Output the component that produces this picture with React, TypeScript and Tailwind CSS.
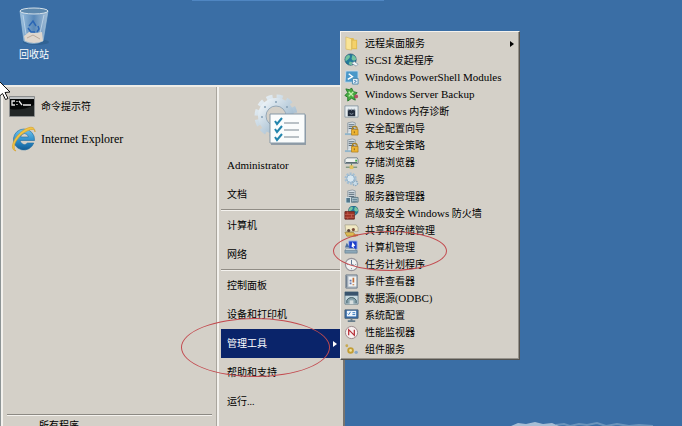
import type { ReactNode } from "react";

type IconName =
  | "folder" | "iscsi" | "powershell" | "backup" | "memory" | "lock" | "storage"
  | "gear" | "server" | "firewall" | "share" | "computer" | "clock" | "events"
  | "odbc" | "config" | "monitor" | "component";

const adminTools: { label: string; icon: IconName; more?: boolean }[] = [
  { label: "远程桌面服务", icon: "folder", more: true },
  { label: "iSCSI 发起程序", icon: "iscsi" },
  { label: "Windows PowerShell Modules", icon: "powershell" },
  { label: "Windows Server Backup", icon: "backup" },
  { label: "Windows 内存诊断", icon: "memory" },
  { label: "安全配置向导", icon: "lock" },
  { label: "本地安全策略", icon: "lock" },
  { label: "存储浏览器", icon: "storage" },
  { label: "服务", icon: "gear" },
  { label: "服务器管理器", icon: "server" },
  { label: "高级安全 Windows 防火墙", icon: "firewall" },
  { label: "共享和存储管理", icon: "share" },
  { label: "计算机管理", icon: "computer" },
  { label: "任务计划程序", icon: "clock" },
  { label: "事件查看器", icon: "events" },
  { label: "数据源(ODBC)", icon: "odbc" },
  { label: "系统配置", icon: "config" },
  { label: "性能监视器", icon: "monitor" },
  { label: "组件服务", icon: "component" },
];

const places = [
  ["Administrator", "文档"],
  ["计算机", "网络"],
  ["控制面板", "设备和打印机", "管理工具", "帮助和支持", "运行..."],
];

const serverTower = (
  <>
    <path d="M4 2 9 1l3 1v12H4z" fill="#d4dde3" stroke="#788894" strokeWidth=".7" />
    <path d="M5 4h6M5 6h6M5 8h6" stroke="#566874" />
    <path d="M4 13h8" stroke="#fff" />
  </>
);

const globe = (
  <>
    <circle cx="7" cy="7" r="6" fill="#257b9b" stroke="#164a69" strokeWidth=".7" />
    <path d="M3 3c3-2 4 0 3 2S3 7 2 9c-1-2-1-4 1-6m6-1c3 1 4 3 4 5-2 2-4 1-5-1zm-3 7 4 1-2 3-3-1z" fill="#74c4a0" />
  </>
);

const drawings: Record<IconName, ReactNode> = {
  folder: (
    <>
      <path d="M3 2h7l1 2h3v10H3z" fill="#e0bb52" />
      <path d="m2 1 6 2v12l-6-1z" fill="#f9e496" stroke="#d4b352" strokeWidth=".6" />
      <path d="M9 5h4v8H9" fill="#f4d169" />
    </>
  ),
  iscsi: (
    <>
      {globe}
      <path d="m8 11 5 3 2-2-4-3z" fill="#eef4f7" stroke="#708594" strokeWidth=".7" />
    </>
  ),
  powershell: (
    <>
      <path d="M2 1h13v12H1z" fill="#4a98c9" stroke="#c6dceb" />
      <path d="m5 4 4 3-5 3" fill="none" stroke="#fff" strokeWidth="1.5" />
      <path d="M9 9h6v6H9z" fill="#e2eef6" stroke="#4f89ad" />
      <path d="m11 11 2 1-2 2" fill="none" stroke="#256ba3" />
    </>
  ),
  backup: (
    <>
      <path d="m2 2 4 1 2-2 2 4 4 1-3 3 1 5-4-2-4 3V11L1 9l3-3z" fill="#48ac42" stroke="#24782b" />
      <path d="m5 5 5 5m0-5-5 5" stroke="#c3efae" strokeWidth="1.5" />
      <circle cx="13" cy="10" r="2" fill="#b24e68" />
    </>
  ),
  memory: (
    <>
      <path d="M1 2h14v12H1z" fill="#e7edf0" stroke="#8b9aa4" />
      <path d="M4 6h8v7H4z" fill="#222c3b" />
      <path d="M5 5v2m3-2v2m3-2v2M6 10l2 1 2-1" stroke="#8d9baa" fill="none" />
    </>
  ),
  lock: (
    <>
      {serverTower}
      <path d="M1 13h8v2H1z" fill="#91b5cb" />
      <path d="M9 10V8c0-3 5-3 5 0v2" fill="none" stroke="#a88024" strokeWidth="1.3" />
      <path d="M8 9h7v6H8z" fill="#edb432" stroke="#aa7718" strokeWidth=".7" />
      <path d="M11 11v2" stroke="#8b6316" />
    </>
  ),
  storage: (
    <>
      <path d="m1 5 2-2h11l1 2v4H1z" fill="#eef1ef" stroke="#718089" />
      <path d="M2 8h12" stroke="#51616a" />
      <path d="M12 6h2" stroke="#43ae48" strokeWidth="2" />
      <path d="M8 9v4m-6 0h12" stroke="#57815d" />
      <path d="M6 11h4v4H6z" fill="#e2c25d" />
    </>
  ),
  gear: (
    <>
      <circle cx="7" cy="7" r="5" fill="none" stroke="#a3bfd4" strokeWidth="3" strokeDasharray="2 1.140" />
      <circle cx="7" cy="7" r="4" fill="#d9e8f1" stroke="#8fb0cb" />
      <circle cx="12" cy="12" r="2.500" fill="#c9dce8" stroke="#8ba9c0" strokeWidth="1.5" strokeDasharray="1.500 .8" />
    </>
  ),
  server: (
    <>
      {serverTower}
      <path d="M2 9h5v6H2z" fill="#52788c" stroke="#d9e3e6" />
      <path d="M8 9h7v5H8z" fill="#b7cdd5" stroke="#617b87" />
      <path d="M9 11h5m-5 2h5" stroke="#547587" />
    </>
  ),
  firewall: (
    <>
      <g transform="translate(4 -1) scale(.85)">{globe}</g>
      <path d="M1 6h10v8H1z" fill="#9e3427" stroke="#692a24" />
      <path d="M1 9h10M1 12h10M4 6v3m4 0v3m-4 0v2" stroke="#c8695a" strokeWidth=".7" />
    </>
  ),
  share: (
    <>
      <path d="M1 2h12l2 3v4H2z" fill="#f0e8c2" stroke="#a09c82" strokeWidth=".7" />
      <path d="M1 10h9l3 4H3z" fill="#dcb953" stroke="#9a7b2e" strokeWidth=".7" />
      <circle cx="5" cy="8" r="1.700" fill="#5c463c" />
      <circle cx="10" cy="7" r="1.700" fill="#7b4b39" />
      <path d="M10 12h5v2h-5z" fill="#cb7d36" />
    </>
  ),
  computer: (
    <>
      <path d="M5 1h9v9H5z" fill="#1d3fcb" stroke="#a9bce4" />
      <path d="m9 2 3 4-2 1 1 2-3-2z" fill="#fff" />
      <path d="M3 3 1 8h5z" fill="#4c6f9d" />
      <path d="M2 9h9l3 3H1z" fill="#dce3e6" stroke="#8997a3" strokeWidth=".7" />
      <path d="M1 11h13v3H1z" fill="#8ba7b8" stroke="#66808f" strokeWidth=".7" />
    </>
  ),
  clock: (
    <>
      <circle cx="8" cy="8" r="6.500" fill="#f1f2f2" stroke="#96949a" strokeWidth="1.3" />
      <path d="M8 3v5l3 1" fill="none" stroke="#536e8c" />
      <path d="M8 12v1M3 8h1m8 0h1" stroke="#6d8597" />
    </>
  ),
  events: (
    <>
      <path d="M2 1h12v14H2z" fill="#c0c9d1" stroke="#697786" />
      <path d="M5 3h8v10H5z" fill="#f2f3f2" />
      <path d="M3 2v12" stroke="#57667b" />
      <path d="M10 4v5m0 2v1" stroke="#c0703a" strokeWidth="1.8" />
      <path d="M6 7h2m-2 3h2" stroke="#6478b0" strokeWidth="2" />
    </>
  ),
  odbc: (
    <>
      <path d="M1 1h14v13H1z" fill="#c5d8df" stroke="#6b818d" />
      <path d="M1 1h14v4H1z" fill="#39546e" />
      <path d="M3 13V10c2-4 8-4 10 0v3" fill="#8aa5ae" stroke="#3a5761" />
      <path d="M6 10h4v4H6z" fill="#d7dfdf" />
    </>
  ),
  config: (
    <>
      <path d="M1 2h14v9H1z" fill="#3268a7" stroke="#4d6479" />
      <path d="M3 3h10v6H3z" fill="#f2f7fd" />
      <path d="m4 6 1 1 2-3m2 1h3m-3 2h3" fill="none" stroke="#3177bf" />
      <path d="M8 11v2m-4 1h8" stroke="#687d8b" strokeWidth="2" />
    </>
  ),
  monitor: (
    <>
      <circle cx="8" cy="8" r="6.500" fill="#f7f0f0" stroke="#9b8587" />
      <path d="M5 11V5l6 6V5" fill="none" stroke="#b52c34" strokeWidth="1.300" />
    </>
  ),
  component: (
    <>
      <circle cx="7" cy="9" r="2.500" fill="#f0e2a0" stroke="#c39e35" strokeWidth="2" />
      <circle cx="3" cy="4" r="1.500" fill="#c6a953" />
      <circle cx="13" cy="11" r="1.800" fill="#88a8c6" />
    </>
  ),
};

function ToolIcon({ name }: { name: IconName }) {
  return (
    <svg viewBox="0 0 16 16" className="h-[15px] w-[15px] shrink-0" aria-hidden="true">
      {drawings[name]}
    </svg>
  );
}

// Latin runs are set one step larger than the Chinese around them
function Label({ text }: { text: string }) {
  return (
    <span className="whitespace-pre">
      {text.split(/([A-Za-z]+(?: [A-Za-z]+)*)/).map((part, i) =>
        i % 2 ? <span key={i} className="text-[11px]">{part}</span> : part
      )}
    </span>
  );
}

function RecycleBin() {
  return (
    <svg viewBox="0 0 36 42" className="h-[42px] w-9" aria-hidden="true">
      <defs>
        <linearGradient id="bin">
          <stop stopColor="#b5d5ee" stopOpacity=".8" />
          <stop offset=".5" stopColor="#608fbd" stopOpacity=".8" />
          <stop offset="1" stopColor="#d0e0eb" stopOpacity=".7" />
        </linearGradient>
      </defs>
      <ellipse cx="20" cy="37" rx="13" ry="3" fill="#25527b" opacity=".4" />
      <path d="m4 6 4 30q9 5 19 0l5-30z" fill="url(#bin)" stroke="#9fc0d9" strokeWidth=".7" />
      <path d="m8 31 5-4 7 1 6-1 1 9q-9 4-18 0z" fill="#ded6cd" />
      <path d="m11 33 6-3 7 4" fill="none" stroke="#b8a99c" />
      <path d="m13 21 4-5 3 5m-8 2 3 4h4m3-6 1 3-2 3" fill="none" stroke="#2a66b5" strokeWidth="1.500" />
      <ellipse cx="18" cy="6" rx="14" ry="3" fill="#5d88ad" stroke="#d5e1e9" />
      <path d="m7 10 3 19m18-19-4 18" stroke="#d8e9f5" opacity=".6" />
    </svg>
  );
}

function CommandIcon() {
  return (
    <svg viewBox="0 0 26 22" className="h-[22px] w-[26px]" aria-hidden="true">
      <path d="M.5.5h25v20H.5z" fill="#bfc2c3" stroke="#8b8d8d" />
      <path d="M1 3h24v17H1z" fill="#050707" />
      <path d="M6 5H3v4h3m2-4v1m0 2v1m2-4 3 4m1 0h8" fill="none" stroke="#e8e8e8" strokeWidth="1.3" />
      <path d="M1 13q12 2 24-4v11H1z" fill="#303434" opacity=".7" />
    </svg>
  );
}

function ExplorerIcon() {
  return (
    <svg viewBox="0 0 26 26" className="h-[26px] w-[26px]" aria-hidden="true">
      <defs>
        <linearGradient id="ie" x2="0" y2="1">
          <stop stopColor="#6fc3ee" />
          <stop offset=".6" stopColor="#2a8ac6" />
          <stop offset="1" stopColor="#125b94" />
        </linearGradient>
      </defs>
      <path
        d="M13 3a10.500 10.500 0 1 0 9.800 14h-6.300q-3.500 3.500-6.500-.5-.8-1.200-.8-2h14.300A10.500 10.500 0 0 0 13 3M9.500 11q1-3.500 4-3.500T17.500 11z"
        fill="url(#ie)"
        fillRule="evenodd"
        stroke="#1f6c9f"
        strokeWidth=".6"
      />
      <path d="M5 25C-1 24 1 15 8 8c7-7 16-10 16-2 0-5-8-2-14 3-6 6-9 13-5 16" fill="#f1c545" stroke="#d49c25" strokeWidth=".6" />
    </svg>
  );
}

function ToolsPicture() {
  return (
    <svg viewBox="0 0 54 56" className="h-14 w-[54px]" aria-hidden="true">
      <defs>
        <linearGradient id="metal" x2="1" y2="1">
          <stop stopColor="#eef4f8" />
          <stop offset="1" stopColor="#91afc6" />
        </linearGradient>
      </defs>
      <g fill="none" stroke="url(#metal)">
        <circle cx="22" cy="25" r="19" strokeWidth="5" strokeDasharray="6 3.950" />
        <circle cx="22" cy="25" r="14" strokeWidth="8" />
      </g>
      <circle cx="22" cy="25" r="10" fill="#d4d0c8" stroke="#95a9b9" />
      <g fill="#86a1b6">
        <circle cx="22" cy="11" r="1" />
        <circle cx="11" cy="16" r="1" />
        <circle cx="33" cy="16" r="1" />
        <circle cx="8" cy="26" r="1" />
      </g>
      <path d="M17 24h35v30H17z" fill="#929da6" />
      <path d="M16 23h35v29H16z" fill="#fafcfc" stroke="#8799a7" />
      <path d="m21 30 2 3 5-6m-7 11 2 3 5-6m-7 11 2 3 5-6" fill="none" stroke="#2385ad" strokeWidth="2" />
      <path d="M30 32h15m-15 7h15m-15 7h15" stroke="#798690" />
    </svg>
  );
}

function StartMenu() {
  return (
    <nav aria-label="开始菜单" className="flex min-h-0 w-[345px] flex-1 border-t-2 border-r-2 border-l border-t-[#eeece7] border-r-[#77746f] border-l-[#8d9495] bg-[#d4d0c8]">
      <div className="flex w-[216px] shrink-0 flex-col border-r border-l-2 border-r-[#aaa69e] border-l-[#f3f1ed] pr-1 pl-1">
        <button className="mt-1 flex h-8 shrink-0 items-center gap-[6px] pl-[2px] text-left">
          <CommandIcon />
          <Label text="命令提示符" />
        </button>
        <button className="flex h-8 shrink-0 items-center gap-1 pl-1 text-left">
          <ExplorerIcon />
          <span className="text-xs">Internet Explorer</span>
        </button>
        <div className="mt-auto h-3 shrink-0 border-t border-[#8c8983] shadow-[inset_0_1px_0_#f4f2ee]">
          <button className="block pt-[3px] pl-8">所有程序</button>
        </div>
      </div>
      <div className="flex flex-1 flex-col border-l-2 border-[#f3f1ed] px-[2px]">
        <div className="flex h-16 shrink-0 justify-center pt-1">
          <ToolsPicture />
        </div>
        {places.map((group, i) => (
          <div key={i} className={i ? "border-t border-[#918d86] pt-px shadow-[inset_0_1px_0_#f4f2ee]" : ""}>
            {group.map((label) => (
              <button
                key={label}
                className={
                  label === "管理工具"
                    ? "flex h-[29px] w-full items-center bg-[#0a246a] pl-[6px] text-white"
                    : "flex h-[29px] w-full items-center pl-[6px]"
                }
              >
                <Label text={label} />
                {label === "管理工具" && (
                  <svg viewBox="0 0 4 6" className="mr-1 ml-auto h-[6px] w-1">
                    <path d="m0 0 4 3-4 3z" fill="currentColor" />
                  </svg>
                )}
              </button>
            ))}
          </div>
        ))}
      </div>
    </nav>
  );
}

function AdminToolsMenu() {
  return (
    <div className="absolute top-[31px] left-[340px] w-[180px] border border-t-[#f4f2ee] border-r-[#55534f] border-b-[#55534f] border-l-[#f4f2ee] bg-[#d4d0c8] pt-[3px] pb-px shadow-[inset_-1px_-1px_0_#96938c]">
      {adminTools.map((tool) => (
        <button key={tool.label} className="flex h-[17px] w-full items-center gap-[6px] pl-[3px]">
          <ToolIcon name={tool.icon} />
          <Label text={tool.label} />
          {tool.more && (
            <svg viewBox="0 0 4 6" className="mr-[5px] ml-auto h-[6px] w-1">
              <path d="m0 0 4 3-4 3z" />
            </svg>
          )}
        </button>
      ))}
    </div>
  );
}

export default function App() {
  return (
    <main className="relative flex h-screen flex-col overflow-hidden bg-[#3a6ea5] font-['Liberation_Serif','Noto_Sans_CJK_SC',serif] text-[10px] leading-4 text-black">
      <div className="absolute top-0 left-48 h-px w-48 bg-[#4f86c2]" />
      <div className="h-[85px] shrink-0 pt-[5px] pl-[9px]">
        <button className="flex w-[50px] flex-col items-center text-white">
          <RecycleBin />
          <span>回收站</span>
        </button>
      </div>
      <StartMenu />
      <AdminToolsMenu />

      {/* Hand-drawn rings round the two entries */}
      <div className="pointer-events-none absolute top-[318px] left-[181px] h-[59px] w-[149px] rounded-[50%] border border-[#c34b50]" />
      <div className="pointer-events-none absolute top-[231px] left-[333px] h-10 w-[114px] rounded-[50%] border border-[#c34b50]" />

      <svg viewBox="0 0 14 22" className="absolute top-[80px] left-0 h-[22px] w-[14px]" aria-hidden="true">
        <path d="m-1 1 11 11-5 .5 3 6-2.500 1-3-6-3.500 3z" fill="#fff" stroke="#111" />
      </svg>
      <svg viewBox="0 0 150 8" className="absolute right-6 bottom-0 h-2 w-[150px]" aria-hidden="true">
        <path d="m3 8 7-3 8 1 9-2 8 2 9-1 7 3z" fill="#d3e0e9" opacity=".7" />
        <path d="m48 7 8-1 6 2 9-2 8 1 10-2 9 3 11-2 12 2 10-1 14 1" fill="none" stroke="#a9c3d8" strokeWidth="2" opacity=".45" />
      </svg>
    </main>
  );
}
